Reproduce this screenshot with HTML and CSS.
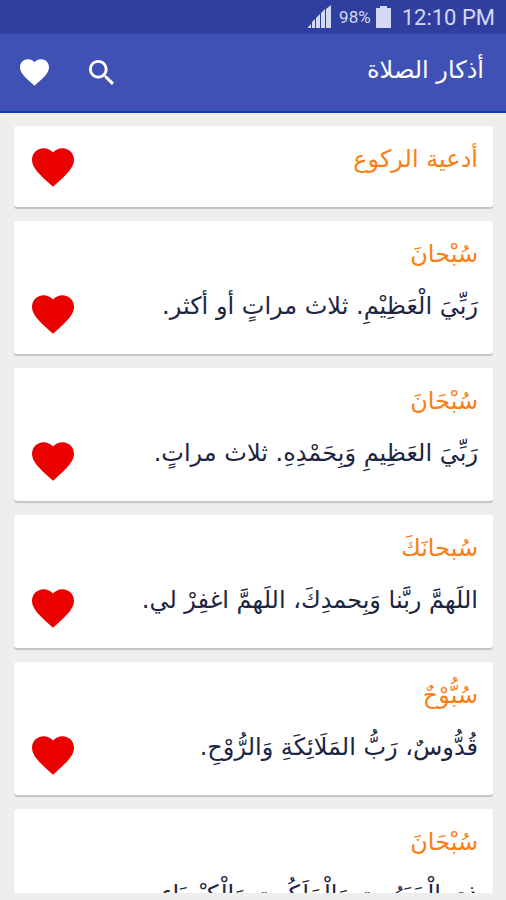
FILE: index.html
```
<!DOCTYPE html>
<html lang="ar" dir="rtl">
<head>
    <meta charset="UTF-8">
    <meta name="viewport" content="width=device-width, initial-scale=1.0">
    <title>أذكار الصلاة</title>
    <link rel="stylesheet" href="styles.css">
</head>
<body>
    <svg class="sprite" aria-hidden="true">
        <symbol id="heart" viewBox="2 3 20 18.4">
            <path d="M12 21.35l-1.45-1.32C5.4 15.36 2 12.28 2 8.5 2 5.42 4.42 3 7.5 3c1.74 0 3.41.81 4.5 2.09C13.09 3.81 14.76 3 16.5 3 19.58 3 22 5.42 22 8.5c0 3.78-3.4 6.86-8.55 11.54L12 21.35z"/>
        </symbol>
    </svg>

    <div class="status-bar" dir="ltr">
        <svg class="signal" viewBox="0 0 24 24">
            <path d="M0 23v-1l3-3v4zM4 23v-6l3-3v9zM8 23V13l4-4v14z"/>
            <path d="M13 23V8l4-4v19zM18 23V4l5-4v23z"/>
        </svg>
        <span class="battery-level">98%</span>
        <svg class="battery" viewBox="0 0 15 22">
            <path d="M4 0h7v2h4v20H0V2h4z"/>
        </svg>
        <span class="clock">12:10 PM</span>
    </div>

    <header class="app-bar">
        <h1>أذكار الصلاة</h1>
        <div class="actions">
            <button type="button" aria-label="بحث">
                <svg class="search-icon" viewBox="3 3 17.5 17.5">
                    <path d="M15.5 14h-.79l-.28-.27C15.41 12.59 16 11.11 16 9.5 16 5.91 13.09 3 9.5 3S3 5.91 3 9.5 5.91 16 9.5 16c1.61 0 3.09-.59 4.23-1.57l.27.28v.79l5 4.99L20.49 19l-4.99-5zm-6 0C7.01 14 5 11.99 5 9.5S7.01 5 9.5 5 14 7.01 14 9.5 11.99 14 9.5 14z"/>
                </svg>
            </button>
            <button type="button" aria-label="المفضلة">
                <svg class="fav-icon"><use href="#heart"/></svg>
            </button>
        </div>
    </header>

    <main class="list">
        <article class="card">
            <div class="text">
                <h2>أدعية الركوع</h2>
            </div>
            <button type="button" class="like" aria-label="إزالة من المفضلة"><svg><use href="#heart"/></svg></button>
        </article>

        <article class="card">
            <div class="text">
                <h2>سُبْحانَ</h2>
                <p>رَبِّيَ الْعَظِيْمِ. ثلاث مراتٍ أو أكثر.</p>
            </div>
            <button type="button" class="like" aria-label="إزالة من المفضلة"><svg><use href="#heart"/></svg></button>
        </article>

        <article class="card">
            <div class="text">
                <h2>سُبْحَانَ</h2>
                <p>رَبِّيَ العَظِيمِ وَبِحَمْدِهِ. ثلاث مراتٍ.</p>
            </div>
            <button type="button" class="like" aria-label="إزالة من المفضلة"><svg><use href="#heart"/></svg></button>
        </article>

        <article class="card">
            <div class="text">
                <h2>سُبحانَكَ</h2>
                <p>اللَهمَّ ربَّنا وَبِحمدِكَ، اللَهمَّ اغفِرْ لي.</p>
            </div>
            <button type="button" class="like" aria-label="إزالة من المفضلة"><svg><use href="#heart"/></svg></button>
        </article>

        <article class="card">
            <div class="text">
                <h2>سُبُّوْحٌ</h2>
                <p>قُدُّوسٌ، رَبُّ المَلَائِكَةِ وَالرُّوْحِ.</p>
            </div>
            <button type="button" class="like" aria-label="إزالة من المفضلة"><svg><use href="#heart"/></svg></button>
        </article>

        <article class="card">
            <div class="text">
                <h2>سُبْحَانَ</h2>
                <p>ذِي الْجَبَرُوتِ وَالْمَلَكُوتِ وَالْكِبْرِيَاءِ وَالْعَظَمَةِ.</p>
            </div>
            <button type="button" class="like" aria-label="إزالة من المفضلة"><svg><use href="#heart"/></svg></button>
        </article>
    </main>
</body>
</html>
```
FILE: styles.css
```
* {
    margin: 0;
    padding: 0;
    box-sizing: border-box;
}

body {
    display: flex;
    flex-direction: column;
    height: 100vh;
    padding-bottom: 7px;
    overflow: hidden;
    background-color: #eee;
    font-family: "DejaVu Sans", sans-serif;
}

button {
    display: flex;
    border: none;
    background: none;
    cursor: pointer;
}

.sprite {
    display: none;
}

.status-bar {
    display: flex;
    flex-shrink: 0;
    justify-content: flex-end;
    align-items: center;
    height: 34px;
    padding: 0 11px;
    background-color: #303f9f;
    color: #d3d8f3;
    fill: #d3d8f3;
    font-family: Roboto, sans-serif;
}

.signal {
    width: 24px;
    height: 24px;
    margin-right: 7px;
}

.battery-level {
    margin-right: 5px;
    font-size: 17px;
}

.battery {
    width: 15px;
    height: 22px;
    margin-right: 11px;
}

.clock {
    font-size: 22px;
}

.app-bar {
    display: flex;
    flex-shrink: 0;
    justify-content: space-between;
    align-items: center;
    height: 79px;
    padding: 0 22px 0 20px;
    border-bottom: 2px solid #1a3aa8;
    background-color: #3f51b5;
    color: #fff;
}

.app-bar h1 {
    padding-bottom: 6px;
    font-size: 24px;
    font-weight: normal;
}

.actions {
    display: flex;
    align-items: center;
    gap: 40px;
    fill: #fff;
}

.search-icon {
    width: 25px;
    height: 25px;
}

.fav-icon {
    width: 29px;
    height: 27px;
}

.list {
    flex: 1;
    min-height: 0;
    padding: 13px 13px 0 14px;
    overflow: hidden;
}

.card {
    display: flex;
    justify-content: space-between;
    align-items: flex-end;
    gap: 44px;
    margin-bottom: 14px;
    padding: 12px 15px 20px 18px;
    border-radius: 3px;
    background-color: #fff;
    box-shadow: 0 2px 1px #c4c4c4;
}

.text {
    flex: 1;
    min-height: 49px;
}

.card h2 {
    color: #fb7e14;
    font-size: 24px;
    font-weight: normal;
    line-height: 42px;
}

.card p {
    margin: 10px 0 6px;
    color: #1c2541;
    font-size: 24px;
    line-height: 43px;
}

.like {
    fill: #eb0000;
}

.like svg {
    width: 42px;
    height: 39px;
}
```
